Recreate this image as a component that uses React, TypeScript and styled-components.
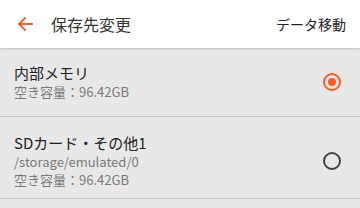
import React from "react";
import styled, { createGlobalStyle } from "styled-components";

const GlobalStyle = createGlobalStyle`
	html, body {
		margin: 0;
		padding: 0;
		background: #e8e8e8;
	}
	body {
		font-family: "Noto Sans CJK JP", "Noto Sans", sans-serif;
		color: #222;
	}
`;

interface Storage {
	name: string;
	path?: string;
	free: string;
	selected: boolean;
}

const STORAGES: Storage[] = [
	{ name: "内部メモリ", free: "96.42GB", selected: true },
	{ name: "SDカード・その他1", path: "/storage/emulated/0", free: "96.42GB", selected: false },
];

const BackArrow = () => (
	<svg width="16" height="16" viewBox="0 0 16 16" fill="none">
		<path d="M15 8H2M8 2L2 8l6 6" stroke="#ff5a1f" strokeWidth="1.8" strokeLinecap="square" />
	</svg>
);

const App = () => {
	return (
		<>
			<GlobalStyle />
			<Screen>
				<Header>
					<BackButton>
						<BackArrow />
					</BackButton>
					<Title>保存先変更</Title>
					<Action>データ移動</Action>
				</Header>
				<List>
					{STORAGES.map((s) => (
						<Row key={s.name} $tall={!!s.path}>
							<Info>
								<Name>{s.name}</Name>
								{s.path && <Sub>{s.path}</Sub>}
								<Sub>空き容量：{s.free}</Sub>
							</Info>
							<Radio $checked={s.selected} />
						</Row>
					))}
				</List>
			</Screen>
		</>
	);
};

export default App;

const Screen = styled.div`
	width: 360px;
	height: 208px;
	overflow: hidden;
	background: #e8e8e8;
`;

const Header = styled.header`
	height: 48px;
	background: #fff;
	display: flex;
	align-items: center;
	position: relative;
	box-shadow: 0 1px 2px rgba(0, 0, 0, 0.18);
	z-index: 1;
`;

const BackButton = styled.div`
	flex: none;
	width: 51px;
	display: flex;
	align-items: center;
	padding-left: 17px;
	box-sizing: border-box;
`;

const Title = styled.h1`
	flex: 1;
	margin: 0;
	font-size: 16px;
	font-weight: 400;
	color: #333;
`;

const Action = styled.span`
	font-size: 14px;
	color: #222;
	padding-right: 14px;
`;

const List = styled.div`
	display: flex;
	flex-direction: column;
`;

const Row = styled.div<{ $tall: boolean }>`
	display: flex;
	align-items: center;
	justify-content: space-between;
	padding: ${(p) => (p.$tall ? "16px 19px 9px 14px" : "15px 19px 15px 14px")};
	border-bottom: 1px solid #c4c4c4;
`;

const Info = styled.div`
	display: flex;
	flex-direction: column;
`;

const Name = styled.div`
	font-size: 15px;
	line-height: 20px;
	color: #222;
`;

const Sub = styled.div`
	font-size: 13px;
	line-height: 18px;
	color: #7a7a7a;
`;

const Radio = styled.span<{ $checked: boolean }>`
	width: 18px;
	height: 18px;
	box-sizing: border-box;
	border-radius: 50%;
	border: 2px solid ${(p) => (p.$checked ? "#ff5a1f" : "#444")};
	display: flex;
	align-items: center;
	justify-content: center;
	&::after {
		content: "";
		width: 8px;
		height: 8px;
		border-radius: 50%;
		background: ${(p) => (p.$checked ? "#ff5a1f" : "transparent")};
	}
`;
